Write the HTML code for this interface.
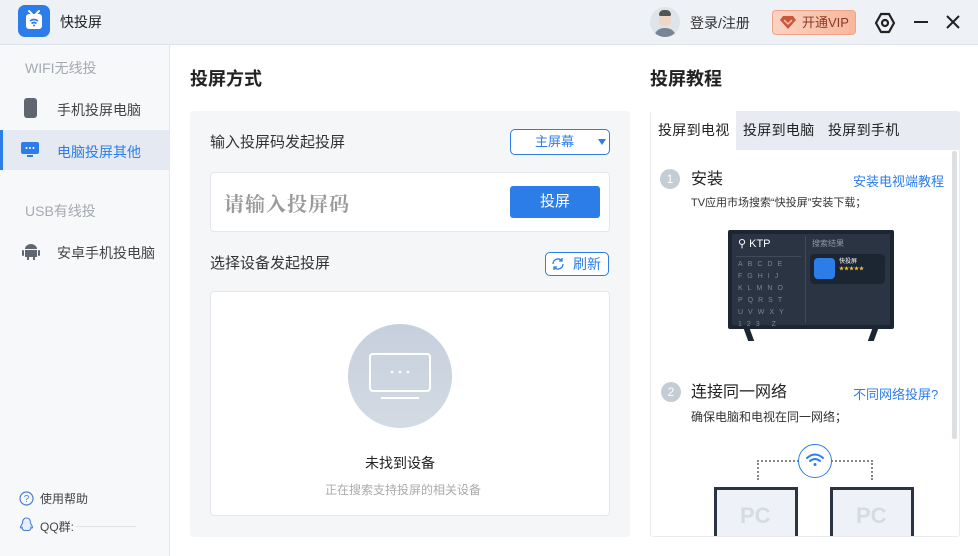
<!DOCTYPE html>
<html><head><meta charset="utf-8"><style>
*{margin:0;padding:0;box-sizing:border-box}
body{width:978px;height:556px;overflow:hidden;background:#fff;font-family:"Liberation Sans","Noto Sans CJK SC",sans-serif;color:#333;position:relative;line-height:1.25}
.a{position:absolute}
.top{left:0;top:0;width:978px;height:45px;background:#eef1f6;border-bottom:1px solid #dfe3ea}
.side{left:0;top:45px;width:170px;height:511px;background:#f7f8fa;border-right:1px solid #e4e7ec}
.t{font-size:14px;white-space:nowrap}
</style></head><body>
<div class="a top"></div>
<div class="a" style="left:18px;top:5px;width:32px;height:32px;border-radius:7px;background:#2d7de8"></div>
<svg class="a" style="left:18px;top:5px" width="32" height="32" viewBox="0 0 32 32"><path d="M11 6l3 3M21 6l-3 3" stroke="#fff" stroke-width="2" stroke-linecap="round"/><rect x="8" y="9" width="16" height="15" rx="3" fill="#fff"/><path d="M12 16q4-3 8 0M13.5 18.5q2.5-2 5 0" stroke="#2d7de8" stroke-width="1.6" fill="none"/><circle cx="16" cy="20.5" r="1" fill="#2d7de8"/></svg>
<div class="a t" style="left:60px;top:14px;font-size:14px;color:#222">快投屏</div>
<div class="a" style="left:650px;top:7px;width:30px;height:30px;border-radius:50%;background:#dfe3ea;overflow:hidden"><div class="a" style="left:9px;top:5px;width:12px;height:14px;border-radius:6px;background:#f0d6c4"></div><div class="a" style="left:9px;top:3px;width:12px;height:6px;border-radius:6px 6px 2px 2px;background:#555"></div><div class="a" style="left:4px;top:21px;width:22px;height:12px;border-radius:10px 10px 0 0;background:#7a8594"></div></div>
<div class="a t" style="left:690px;top:15px;color:#333">登录/注册</div>
<div class="a" style="left:772px;top:10px;width:84px;height:25px;border-radius:4px;background:linear-gradient(90deg,#fbd3c3,#f7b79c);border:1px solid #f0a386"></div>
<svg class="a" style="left:780px;top:15px" width="16" height="14" viewBox="0 0 16 14"><path d="M3 1h10l3 4-8 9-8-9z" fill="#c8573b"/><path d="M4 5l4 4 4-4" stroke="#f7c3ad" stroke-width="1.5" fill="none"/></svg>
<div class="a t" style="left:802px;top:15px;font-size:13px;color:#8a3a22">开通VIP</div>
<svg class="a" style="left:874px;top:12px" width="22" height="22" viewBox="0 0 22 22"><path d="M7 2h8l5 9-5 9H7L2 11z" fill="none" stroke="#222" stroke-width="2.2" stroke-linejoin="round"/><circle cx="11" cy="11" r="3" fill="none" stroke="#222" stroke-width="2.2"/></svg>
<div class="a" style="left:914px;top:21px;width:14px;height:2px;background:#222"></div>
<svg class="a" style="left:946px;top:15px" width="14" height="14" viewBox="0 0 14 14"><path d="M1 1l12 12M13 1L1 13" stroke="#222" stroke-width="2"/></svg>

<div class="a side"></div>
<div class="a t" style="left:25px;top:60px;color:#a5a9b0">WIFI无线投</div>
<div class="a" style="left:24px;top:98px;width:13px;height:20px;border-radius:3px;background:#5f6670"></div>
<div class="a t" style="left:57px;top:102px;color:#444">手机投屏电脑</div>
<div class="a" style="left:0;top:130px;width:169px;height:40px;background:#e5eaf2"></div>
<div class="a" style="left:0;top:130px;width:3px;height:40px;background:#2d7de8"></div>
<svg class="a" style="left:21px;top:142px" width="18" height="16" viewBox="0 0 18 16"><rect x="0" y="0" width="18" height="12" rx="2" fill="#2d7de8"/><rect x="6" y="13" width="6" height="2" fill="#2d7de8"/><circle cx="5.5" cy="6" r="1" fill="#fff"/><circle cx="9" cy="6" r="1" fill="#fff"/><circle cx="12.5" cy="6" r="1" fill="#fff"/></svg>
<div class="a t" style="left:57px;top:144px;color:#2d7de8">电脑投屏其他</div>
<div class="a t" style="left:25px;top:203px;color:#a5a9b0">USB有线投</div>
<svg class="a" style="left:22px;top:242px" width="18" height="18" viewBox="0 0 18 18"><path d="M3 7a6 5 0 0 1 12 0z" fill="#5f6670"/><rect x="3" y="8" width="12" height="7" fill="#5f6670"/><rect x="0" y="8" width="2" height="6" rx="1" fill="#5f6670"/><rect x="16" y="8" width="2" height="6" rx="1" fill="#5f6670"/><rect x="5" y="14" width="2" height="4" fill="#5f6670"/><rect x="11" y="14" width="2" height="4" fill="#5f6670"/></svg>
<div class="a t" style="left:57px;top:245px;color:#444">安卓手机投电脑</div>
<svg class="a" style="left:19px;top:491px" width="15" height="15" viewBox="0 0 15 15"><circle cx="7.5" cy="7.5" r="6.5" fill="none" stroke="#4a7fd4" stroke-width="1.2"/><text x="7.5" y="11" font-size="10" text-anchor="middle" fill="#4a7fd4" font-family="Liberation Sans">?</text></svg>
<div class="a" style="left:40px;top:492px;font-size:12px;color:#444">使用帮助</div>
<svg class="a" style="left:19px;top:517px" width="15" height="16" viewBox="0 0 15 16"><path d="M7.5 1c3 0 4 2.5 4 5l2 4c0 1.5-1 1-1.5 0.5 0 1.5-1 2.5-2 3H5c-1-0.5-2-1.5-2-3C2.5 11 1.5 11.5 1.5 10l2-4c0-2.5 1-5 4-5z" fill="#e8f0fb" stroke="#4a7fd4" stroke-width="1.1"/></svg>
<div class="a" style="left:40px;top:520px;font-size:12px;color:#444">QQ群:</div>
<div class="a" style="left:76px;top:526px;width:60px;height:1px;background:#e2e4e8"></div>

<div class="a" style="left:190px;top:68px;font-size:18px;font-weight:bold;color:#222">投屏方式</div>
<div class="a" style="left:190px;top:111px;width:440px;height:426px;background:#f5f6f8;border-radius:3px"></div>
<div class="a t" style="left:210px;top:134px;font-size:15px;color:#333">输入投屏码发起投屏</div>
<div class="a" style="left:510px;top:129px;width:100px;height:26px;border:1px solid #2d7de8;border-radius:5px;background:#fff"></div>
<div class="a" style="left:535px;top:134px;font-size:13px;color:#2d7de8">主屏幕</div>
<div class="a" style="left:598px;top:139px;width:0;height:0;border-left:4px solid transparent;border-right:4px solid transparent;border-top:6px solid #2d7de8"></div>
<div class="a" style="left:210px;top:172px;width:400px;height:60px;border:1px solid #e3e6eb;border-radius:4px;background:#fff"></div>
<div class="a" style="left:224px;top:190px;font-size:20px;color:#9a9a9a;font-weight:bold;font-family:'Noto Serif CJK SC','Liberation Serif',serif;letter-spacing:1px">请输入投屏码</div>
<div class="a" style="left:510px;top:186px;width:90px;height:32px;background:#2d7de8;border-radius:3px;color:#fff;font-size:15px;text-align:center;line-height:32px">投屏</div>
<div class="a t" style="left:210px;top:255px;font-size:15px;color:#333">选择设备发起投屏</div>
<div class="a" style="left:545px;top:252px;width:64px;height:24px;border:1px solid #2d7de8;border-radius:5px;background:#fff"></div>
<svg class="a" style="left:551px;top:257px" width="14" height="14" viewBox="0 0 14 14"><path d="M2 7a5 5 0 0 1 9-3M12 7a5 5 0 0 1-9 3" fill="none" stroke="#2d7de8" stroke-width="1.3"/><path d="M11 1v3H8M3 13v-3h3" fill="none" stroke="#2d7de8" stroke-width="1.3"/></svg>
<div class="a" style="left:573px;top:256px;font-size:14px;color:#2d7de8">刷新</div>
<div class="a" style="left:210px;top:291px;width:400px;height:225px;border:1px solid #e3e6eb;border-radius:4px;background:#fff"></div>
<div class="a" style="left:348px;top:324px;width:104px;height:104px;border-radius:50%;background:linear-gradient(180deg,#c6d0dc,#d3dae4)"></div>
<svg class="a" style="left:368px;top:352px" width="64" height="50" viewBox="0 0 64 50"><rect x="2" y="2" width="60" height="37" rx="3" fill="none" stroke="#fff" stroke-width="2"/><rect x="13" y="45" width="38" height="2" fill="#fff"/><circle cx="24" cy="20" r="1.3" fill="#fff"/><circle cx="32" cy="20" r="1.3" fill="#fff"/><circle cx="40" cy="20" r="1.3" fill="#fff"/></svg>
<div class="a t" style="left:365px;top:455px;color:#222">未找到设备</div>
<div class="a" style="left:325px;top:483px;font-size:12px;color:#aaa">正在搜索支持投屏的相关设备</div>

<div class="a" style="left:650px;top:68px;font-size:18px;font-weight:bold;color:#222">投屏教程</div>
<div class="a" style="left:650px;top:111px;width:310px;height:426px;background:#fff;border:1px solid #e8ebf0;border-radius:3px"></div>
<div class="a" style="left:650px;top:111px;width:310px;height:39px;background:#e8ecf2;border-radius:3px 3px 0 0"></div>
<div class="a" style="left:651px;top:111px;width:85px;height:40px;background:#fff"></div>
<div class="a t" style="left:658px;top:122px;font-size:14px;color:#222;letter-spacing:0.3px">投屏到电视</div>
<div class="a t" style="left:743px;top:122px;font-size:14px;color:#222;letter-spacing:0.3px">投屏到电脑</div>
<div class="a t" style="left:828px;top:122px;font-size:14px;color:#222;letter-spacing:0.3px">投屏到手机</div>
<div class="a" style="left:952px;top:151px;width:5px;height:288px;background:#dcdfe4;border-radius:2px"></div>
<div class="a" style="left:660px;top:169px;width:20px;height:20px;border-radius:50%;background:#c4ccd6;color:#fff;font-size:12px;text-align:center;line-height:20px">1</div>
<div class="a t" style="left:691px;top:170px;font-size:16px;color:#222">安装</div>
<div class="a" style="left:853px;top:174px;font-size:13px;color:#2d7de8">安装电视端教程</div>
<div class="a" style="left:691px;top:197px;font-size:11px;color:#333">TV应用市场搜索“快投屏”安装下载；</div>
<div class="a" style="left:728px;top:230px;width:166px;height:99px;background:#1c2633;border-radius:2px"></div>
<div class="a" style="left:732px;top:234px;width:158px;height:91px;background:#2a3442"></div>
<div class="a" style="left:805px;top:236px;width:1px;height:87px;background:#3f4b5a"></div>
<div class="a" style="left:736px;top:256px;width:65px;height:1px;background:#3f4b5a"></div>
<div class="a" style="left:738px;top:238px;font-size:11px;color:#fff">⚲ KTP</div>
<div class="a" style="left:812px;top:239px;font-size:8px;color:#8d97a5">搜索结果</div>
<div class="a" style="left:738px;top:259px;font-size:7px;line-height:12px;color:#7b8594;letter-spacing:5px;width:68px">ABCDE FGHIJ KLMNO PQRST UVWXY 123&nbsp;Z</div>
<div class="a" style="left:810px;top:254px;width:75px;height:30px;background:#1c2633;border-radius:4px"></div>
<div class="a" style="left:814px;top:258px;width:21px;height:21px;background:#2d7de8;border-radius:4px"></div>
<div class="a" style="left:839px;top:259px;font-size:6px;color:#fff">快投屏</div>
<div class="a" style="left:839px;top:266px;font-size:5px;color:#f5c342">★★★★★</div>
<div class="a" style="left:746px;top:329px;width:6px;height:12px;background:#1c2633;transform:skewX(20deg)"></div>
<div class="a" style="left:870px;top:329px;width:6px;height:12px;background:#1c2633;transform:skewX(-20deg)"></div>
<div class="a" style="left:661px;top:382px;width:20px;height:20px;border-radius:50%;background:#c4ccd6;color:#fff;font-size:12px;text-align:center;line-height:20px">2</div>
<div class="a t" style="left:691px;top:383px;font-size:16px;color:#222">连接同一网络</div>
<div class="a" style="left:853px;top:387px;font-size:13px;color:#2d7de8">不同网络投屏?</div>
<div class="a" style="left:691px;top:410px;font-size:12px;color:#333">确保电脑和电视在同一网络；</div>
<div class="a" style="left:757px;top:460px;width:42px;height:20px;border-top:2px dotted #888;border-left:2px dotted #888"></div>
<div class="a" style="left:831px;top:460px;width:42px;height:20px;border-top:2px dotted #888;border-right:2px dotted #888"></div>
<div class="a" style="left:798px;top:444px;width:34px;height:34px;border-radius:50%;border:1px solid #2d7de8;background:#fff"></div>
<svg class="a" style="left:805px;top:452px" width="20" height="16" viewBox="0 0 20 16"><path d="M2 6q8-7 16 0M5 9q5-4 10 0" fill="none" stroke="#2d7de8" stroke-width="2" stroke-linecap="round"/><circle cx="10" cy="12.5" r="1.5" fill="#2d7de8"/></svg>
<div class="a" style="left:714px;top:487px;width:84px;height:49px;border:3px solid #2a3442;border-bottom:none;background:#eef2f8"></div>
<div class="a" style="left:830px;top:487px;width:84px;height:49px;border:3px solid #2a3442;border-bottom:none;background:#eef2f8"></div>
<div class="a" style="left:740px;top:502px;font-size:22px;font-weight:bold;color:#d6dbe3">PC</div>
<div class="a" style="left:856px;top:502px;font-size:22px;font-weight:bold;color:#d6dbe3">PC</div>
</body></html>
